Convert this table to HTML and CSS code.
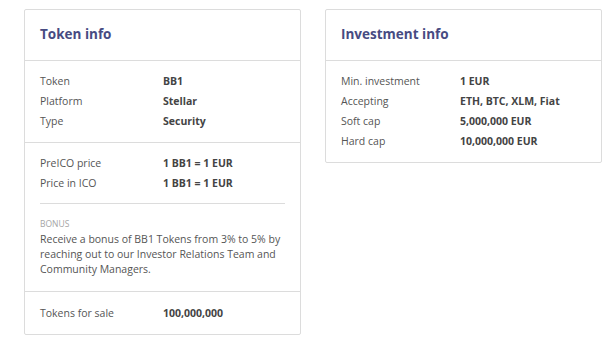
FILE: index.html
```html
<!DOCTYPE html>
<html>
<head>
<meta charset="utf-8">
<link rel="stylesheet" href="styles.css">
</head>
<body>
<div class="page">
  <section class="card">
    <header class="card-head"><h2>Token info</h2></header>
    <div class="section">
      <dl class="rows">
        <dt>Token</dt><dd>BB1</dd>
        <dt>Platform</dt><dd>Stellar</dd>
        <dt>Type</dt><dd>Security</dd>
      </dl>
    </div>
    <div class="section section-bonus">
      <dl class="rows">
        <dt>PreICO price</dt><dd>1 BB1 = 1 EUR</dd>
        <dt>Price in ICO</dt><dd>1 BB1 = 1 EUR</dd>
      </dl>
      <div class="bonus">
        <div class="bonus-label">BONUS</div>
        <p>Receive a bonus of BB1 Tokens from 3% to 5% by reaching out to our Investor Relations Team and Community Managers.</p>
      </div>
    </div>
    <div class="section section-last">
      <dl class="rows">
        <dt>Tokens for sale</dt><dd>100,000,000</dd>
      </dl>
    </div>
  </section>
  <section class="card">
    <header class="card-head"><h2>Investment info</h2></header>
    <div class="section">
      <dl class="rows rows-narrow">
        <dt>Min. investment</dt><dd>1 EUR</dd>
        <dt>Accepting</dt><dd>ETH, BTC, XLM, Fiat</dd>
        <dt>Soft cap</dt><dd>5,000,000 EUR</dd>
        <dt>Hard cap</dt><dd>10,000,000 EUR</dd>
      </dl>
    </div>
  </section>
</div>
</body>
</html>
```
FILE: styles.css
```css
* { box-sizing: border-box; }
body {
  margin: 0;
  background: #fff;
  font-family: "Open Sans", "Liberation Sans", sans-serif;
  color: #555;
}
.page {
  display: flex;
  align-items: flex-start;
  gap: 24px;
  padding: 9px 0 0 24px;
}
.card {
  width: 277px;
  border: 1px solid #dcdcdc;
  border-radius: 2px;
  background: #fff;
}
.card-head {
  height: 51px;
  display: flex;
  align-items: center;
  padding: 0 15px 2px;
  border-bottom: 1px solid #dcdcdc;
}
.card-head h2 {
  margin: 0;
  font-size: 13.5px;
  font-weight: 700;
  color: #474b82;
}
.section {
  padding: 10px 15px 11px;
}
.section + .section { border-top: 1px solid #dcdcdc; }
.section-last { padding-top: 11px; }
.rows {
  display: grid;
  grid-template-columns: 123px 1fr;
  margin: 0;
  font-size: 10.5px;
  line-height: 20px;
}
.rows-narrow { grid-template-columns: 119px 1fr; }
.rows dt { color: #555; }
.rows dd { margin: 0; font-weight: 700; color: #444; }
.section-bonus { padding-bottom: 14px; }
.bonus {
  margin-top: 10px;
  padding-top: 14px;
  border-top: 1px solid #dcdcdc;
}
.bonus-label {
  font-size: 8.5px;
  line-height: 12px;
  color: #a5a5a5;
  text-transform: uppercase;
}
.bonus p {
  margin: 2px 0 0;
  font-size: 10.5px;
  line-height: 15px;
  color: #555;
}
```
